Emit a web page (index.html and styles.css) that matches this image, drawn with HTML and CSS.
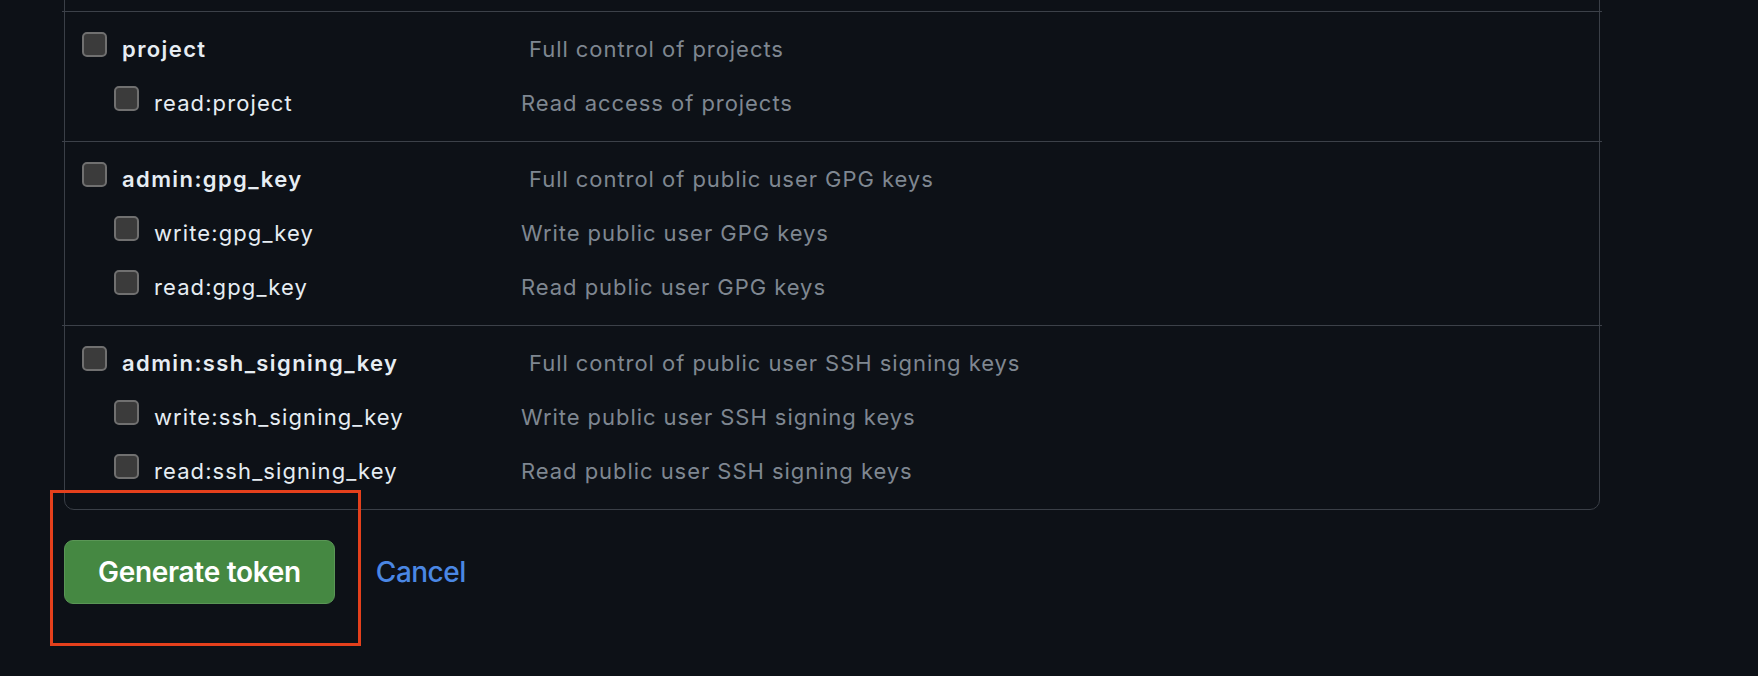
FILE: index.html
```html
<!DOCTYPE html>
<html lang="en">
<head>
<meta charset="utf-8">
<title>New personal access token</title>
<link rel="stylesheet" href="styles.css">
</head>
<body>
<div class="page">
  <div class="scopes">
    <div class="tail"></div>
    <div class="sep"></div>
    <div class="group">
      <div class="row row-parent">
        <label class="name-col"><span class="cb"></span><span class="name">project</span></label>
        <span class="desc">Full control of projects</span>
      </div>
      <div class="row row-child">
        <label class="name-col"><span class="cb"></span><span class="name">read:project</span></label>
        <span class="desc">Read access of projects</span>
      </div>
    </div>
    <div class="sep"></div>
    <div class="group">
      <div class="row row-parent">
        <label class="name-col"><span class="cb"></span><span class="name">admin:gpg_key</span></label>
        <span class="desc">Full control of public user GPG keys</span>
      </div>
      <div class="row row-child">
        <label class="name-col"><span class="cb"></span><span class="name">write:gpg_key</span></label>
        <span class="desc">Write public user GPG keys</span>
      </div>
      <div class="row row-child">
        <label class="name-col"><span class="cb"></span><span class="name">read:gpg_key</span></label>
        <span class="desc">Read public user GPG keys</span>
      </div>
    </div>
    <div class="sep"></div>
    <div class="group">
      <div class="row row-parent">
        <label class="name-col"><span class="cb"></span><span class="name">admin:ssh_signing_key</span></label>
        <span class="desc">Full control of public user SSH signing keys</span>
      </div>
      <div class="row row-child">
        <label class="name-col"><span class="cb"></span><span class="name">write:ssh_signing_key</span></label>
        <span class="desc">Write public user SSH signing keys</span>
      </div>
      <div class="row row-child">
        <label class="name-col"><span class="cb"></span><span class="name">read:ssh_signing_key</span></label>
        <span class="desc">Read public user SSH signing keys</span>
      </div>
    </div>
  </div>
  <div class="actions">
    <button class="btn-primary" type="button">Generate token</button>
    <a class="cancel" href="#">Cancel</a>
    <div class="highlight"></div>
  </div>
</div>
</body>
</html>
```

FILE: styles.css
```css
html, body {
  margin: 0;
  padding: 0;
  background: #0d1117;
  height: 100%;
  overflow: hidden;
}

body {
  font-family: Inter, "Liberation Sans", sans-serif;
  font-size: 22px;
  color: #e6edf3;
}

.page {
  padding-left: 64px;
  width: 1536px;
}

.scopes {
  margin-top: -40px;
  border: 1px solid #3a3f47;
  border-radius: 10px;
}

.tail {
  height: 50px;
}

.sep {
  height: 1px;
  background: #3c4149;
  margin: 0 -3px;
}

.group {
  padding: 20px 0 1px;
}

.row {
  display: flex;
  align-items: flex-start;
  height: 54px;
}

.row-parent {
  padding-left: 17px;
}

.row-child {
  padding-left: 49px;
}

.name-col {
  display: flex;
  align-items: flex-start;
  gap: 15px;
  flex: none;
}

.row-parent .name-col {
  width: 447px;
}

.row-child .name-col {
  width: 407px;
}

.cb {
  width: 25px;
  height: 25px;
  box-sizing: border-box;
  border: 2px solid #707070;
  border-radius: 5px;
  background: #3b3b3b;
  flex: none;
}

.name,
.desc {
  line-height: 26px;
  margin-top: 4px;
  white-space: nowrap;
}

.name {
  letter-spacing: 1.1px;
}

.row-parent .name {
  font-weight: 600;
  letter-spacing: 1.4px;
}

.desc {
  color: #7f8791;
  letter-spacing: 0.95px;
}

.actions {
  position: relative;
  display: flex;
  align-items: center;
  gap: 41px;
  margin-top: 30px;
}

.btn-primary {
  height: 64px;
  padding: 0 33px;
  border: 1px solid #5a9656;
  border-radius: 9px;
  background: #458842;
  color: #ffffff;
  font-family: Inter, "Liberation Sans", sans-serif;
  font-size: 28px;
  font-weight: 600;
  letter-spacing: -0.3px;
}

.cancel {
  color: #4a87e4;
  text-decoration: none;
  font-size: 28px;
  font-weight: 500;
  letter-spacing: -0.5px;
}

.highlight {
  position: absolute;
  left: -14px;
  top: -50px;
  width: 311px;
  height: 156px;
  box-sizing: border-box;
  border: 3px solid #e4401c;
  pointer-events: none;
}
```
